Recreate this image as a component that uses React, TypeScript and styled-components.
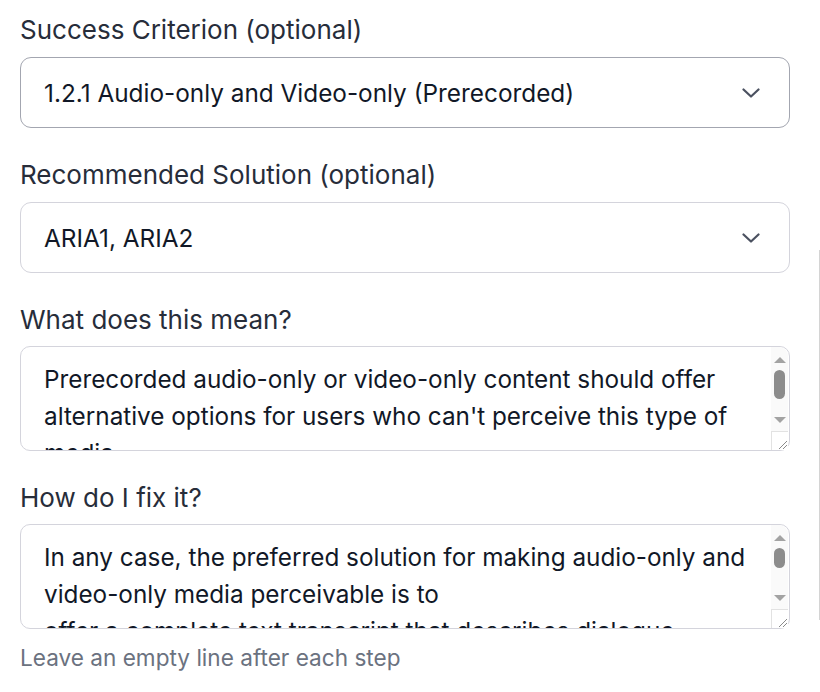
import React from 'react';
import styled, { createGlobalStyle } from 'styled-components';

const GlobalStyle = createGlobalStyle`
  html, body {
    margin: 0;
    padding: 0;
    background: #ffffff;
  }
  body {
    font-family: Inter, "Noto Sans", Arial, sans-serif;
  }
`;

const Page = styled.div`
  width: 820px;
  display: flex;
  flex-direction: row;
  align-items: flex-start;
`;

const Form = styled.div`
  width: 770px;
  padding: 15px 0 0 20px;
  display: flex;
  flex-direction: column;
  gap: 32px;
`;

const Rail = styled.div`
  margin-left: auto;
  margin-top: 250px;
  width: 1px;
  height: 370px;
  background: #d4d4d4;
`;

const Field = styled.div<{ $tight?: boolean }>`
  display: flex;
  flex-direction: column;
  gap: ${(p) => (p.$tight ? 11 : 12)}px;
`;

const Label = styled.label`
  font-size: 26px;
  line-height: 30px;
  color: #272d3a;
`;

const SelectBox = styled.div<{ $strong?: boolean }>`
  box-sizing: border-box;
  height: 71px;
  border: 1px solid ${(p) => (p.$strong ? '#a3a6b0' : '#d4d4dc')};
  border-radius: 11px;
  padding: 0 29px 0 23px;
  display: flex;
  align-items: center;
  justify-content: space-between;
  font-size: 24.35px;
  color: #111827;
  background: #fff;
`;

const Chevron = () => (
  <svg width="18" height="10" viewBox="0 0 18 10" fill="none">
    <polyline points="1.5,1.5 9,8.5 16.5,1.5" stroke="#4b5160" strokeWidth="2.2" strokeLinecap="round" strokeLinejoin="round" />
  </svg>
);

const TextWrap = styled.div`
  position: relative;
  width: 770px;
  height: 105px;
`;

const TextArea = styled.textarea`
  box-sizing: border-box;
  display: block;
  width: 100%;
  height: 100%;
  margin: 0;
  border: 1px solid #d4d4dc;
  border-radius: 10px;
  padding: 14px 40px 0 23px;
  font-family: Inter, "Noto Sans", Arial, sans-serif;
  font-size: 24.3px;
  line-height: 37px;
  color: #111827;
  overflow: hidden;
  resize: none;
  outline: none;
`;

/* fake classic scrollbar drawn over the textarea's right edge */
const ScrollBar = styled.div`
  position: absolute;
  top: 1px;
  right: 2px;
  bottom: 1px;
  width: 17px;
  background: #fafafa;
  display: flex;
  flex-direction: column;
  align-items: center;
  border-top-right-radius: 9px;
`;

const Arrow = styled.div<{ $down?: boolean }>`
  width: 0;
  height: 0;
  border-left: 6px solid transparent;
  border-right: 6px solid transparent;
  ${(p) =>
    p.$down
      ? 'border-top: 6px solid #a3a3a3; margin-top: 18px;'
      : 'border-bottom: 6px solid #a3a3a3; margin-top: 10px;'}
`;

const Thumb = styled.div<{ $h: number }>`
  width: 11px;
  height: ${(p) => p.$h}px;
  margin-top: 7px;
  border-radius: 6px;
  background: #8c8c8c;
`;

const Corner = styled.div`
  margin-top: auto;
  box-sizing: border-box;
  width: 17px;
  height: 19px;
  border-top: 1px solid #e2e2e2;
  border-left: 1px solid #e2e2e2;
  background: #fff;
  display: flex;
  align-items: flex-end;
  justify-content: flex-end;
`;

const Grip = () => (
  <svg width="12" height="12" viewBox="0 0 12 12">
    <line x1="3" y1="11" x2="11" y2="3" stroke="#8a8a8a" strokeWidth="1" />
    <line x1="7" y1="11" x2="11" y2="7" stroke="#8a8a8a" strokeWidth="1" />
  </svg>
);

const Hint = styled.div`
  margin-top: -18px;
  font-size: 22.6px;
  line-height: 30px;
  color: #6b7280;
`;

const meaning =
  "Prerecorded audio-only or video-only content should offer alternative options for users who can't perceive this type of media.";

const fix =
  'In any case, the preferred solution for making audio-only and video-only media perceivable is to\noffer a complete text transcript that describes dialogue, sounds and important visual information.';

const ScrollText = ({ value, thumb, down }: { value: string; thumb: number; down: number }) => (
  <TextWrap>
    <TextArea defaultValue={value} />
    <ScrollBar>
      <Arrow />
      <Thumb $h={thumb} />
      <Arrow $down style={{ marginTop: down }} />
      <Corner>
        <Grip />
      </Corner>
    </ScrollBar>
  </TextWrap>
);

const App = () => {
  return (
    <Page>
      <GlobalStyle />
      <Form>
        <Field>
          <Label>Success Criterion (optional)</Label>
          <SelectBox $strong>
            <span>1.2.1 Audio-only and Video-only (Prerecorded)</span>
            <Chevron />
          </SelectBox>
        </Field>
        <Field>
          <Label>Recommended Solution (optional)</Label>
          <SelectBox>
            <span>ARIA1, ARIA2</span>
            <Chevron />
          </SelectBox>
        </Field>
        <Field $tight>
          <Label>What does this mean?</Label>
          <ScrollText value={meaning} thumb={29} down={18} />
        </Field>
        <Field $tight>
          <Label>How do I fix it?</Label>
          <ScrollText value={fix} thumb={20} down={27} />
        </Field>
        <Hint>Leave an empty line after each step</Hint>
      </Form>
      <Rail />
    </Page>
  );
};

export default App;
